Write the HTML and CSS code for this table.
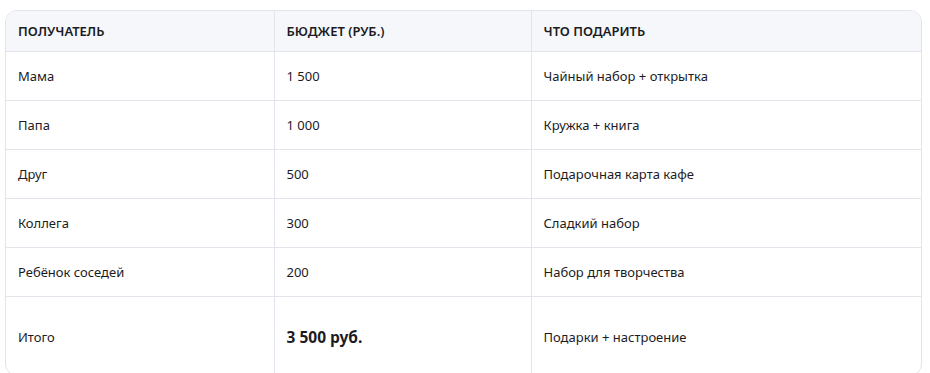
FILE: index.html
```html
<!DOCTYPE html>
<html lang="ru">
<head>
<meta charset="utf-8">
<link rel="stylesheet" href="styles.css">
</head>
<body>
<div class="wrap">
  <table class="tbl">
    <colgroup>
      <col class="c1"><col class="c2"><col class="c3">
    </colgroup>
    <thead>
      <tr><th>ПОЛУЧАТЕЛЬ</th><th>БЮДЖЕТ (РУБ.)</th><th>ЧТО ПОДАРИТЬ</th></tr>
    </thead>
    <tbody>
      <tr><td>Мама</td><td>1 500</td><td>Чайный набор + открытка</td></tr>
      <tr><td>Папа</td><td>1 000</td><td>Кружка + книга</td></tr>
      <tr><td>Друг</td><td>500</td><td>Подарочная карта кафе</td></tr>
      <tr><td>Коллега</td><td>300</td><td>Сладкий набор</td></tr>
      <tr><td>Ребёнок соседей</td><td>200</td><td>Набор для творчества</td></tr>
      <tr class="total"><td>Итого</td><td class="sum">3 500 руб.</td><td>Подарки + настроение</td></tr>
    </tbody>
  </table>
</div>
</body>
</html>
```

FILE: styles.css
```css
html, body {
  margin: 0;
  padding: 0;
  background: #ffffff;
}
body {
  padding: 10px 0 0 5px;
  font-family: "Noto Sans", "Open Sans", sans-serif;
  color: #1c1c1f;
}
.wrap {
  width: 917px;
  border: 1px solid #e2e4ec;
  border-radius: 12px;
  overflow: hidden;
  box-sizing: border-box;
}
.tbl {
  width: 100%;
  border-collapse: collapse;
  table-layout: fixed;
  font-size: 13px;
}
.c1 { width: 268px; }
.c2 { width: 257px; }
.c3 { width: auto; }
.tbl th, .tbl td {
  text-align: left;
  padding: 0 12px 0 12px;
  border-right: 1px solid #e2e4ec;
  border-bottom: 1px solid #e2e4ec;
  vertical-align: middle;
}
.tbl th:last-child, .tbl td:last-child { border-right: none; }
.tbl tr:last-child td { border-bottom: none; }
.tbl th {
  background: #f6f7fa;
  height: 40px;
  font-weight: 600;
  font-size: 13px;
}
.tbl td { height: 48px; }
.tbl .total td { height: 76px; padding-top: 2px; }
.tbl .sum {
  font-weight: 700;
  font-size: 15.5px;
}
```
